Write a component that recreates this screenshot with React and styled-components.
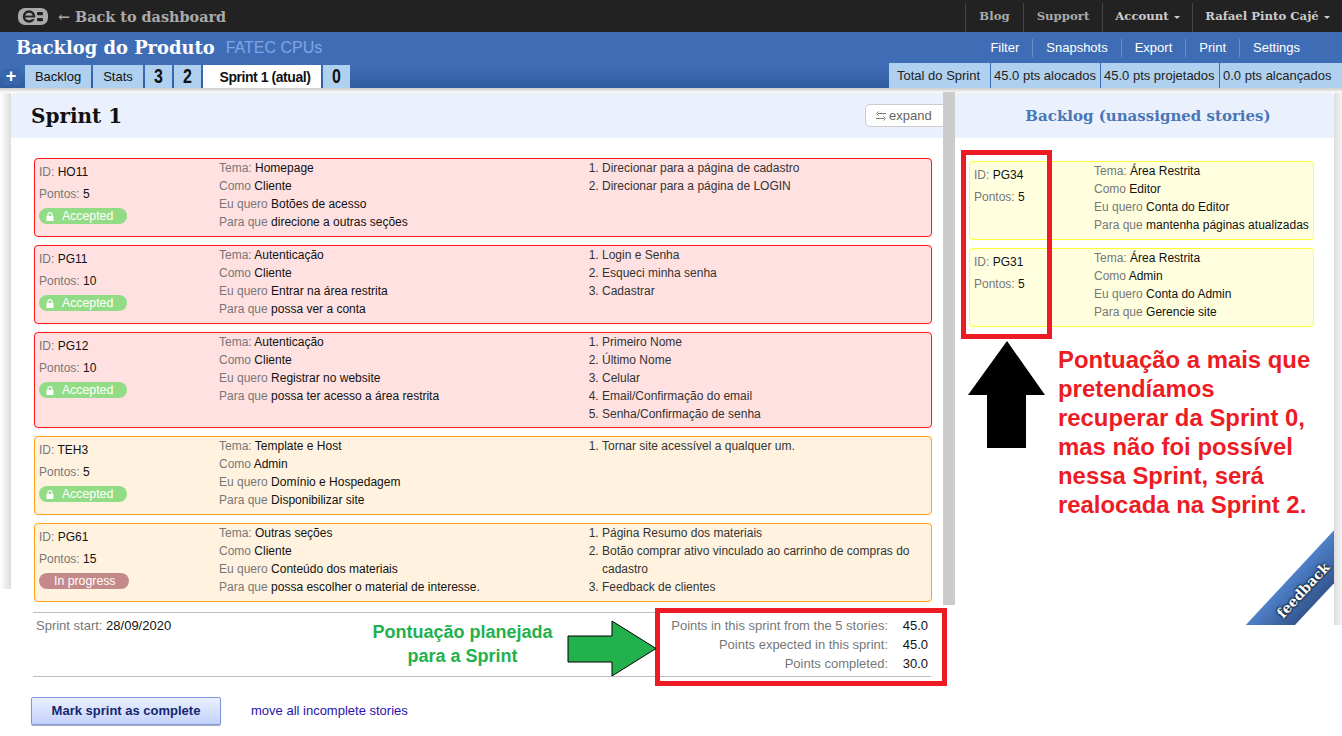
import React from "react";
import styled, { createGlobalStyle } from "styled-components";

const serif = `"DejaVu Serif", "Liberation Serif", serif`;
const sans = `"Liberation Sans", Arial, sans-serif`;

const sprintStories = [
  {
    id: "HO11", points: 5, tone: "red", status: "accepted", tema: "Homepage", como: "Cliente",
    quero: "Botões de acesso", para: "direcione a outras seções",
    tasks: ["Direcionar para a página de cadastro", "Direcionar para a página de LOGIN"],
  },
  {
    id: "PG11", points: 10, tone: "red", status: "accepted", tema: "Autenticação", como: "Cliente",
    quero: "Entrar na área restrita", para: "possa ver a conta",
    tasks: ["Login e Senha", "Esqueci minha senha", "Cadastrar"],
  },
  {
    id: "PG12", points: 10, tone: "red", status: "accepted", tema: "Autenticação", como: "Cliente",
    quero: "Registrar no website", para: "possa ter acesso a área restrita",
    tasks: ["Primeiro Nome", "Último Nome", "Celular", "Email/Confirmação do email", "Senha/Confirmação de senha"],
  },
  {
    id: "TEH3", points: 5, tone: "orange", status: "accepted", tema: "Template e Host", como: "Admin",
    quero: "Domínio e Hospedagem", para: "Disponibilizar site",
    tasks: ["Tornar site acessível a qualquer um."],
  },
  {
    id: "PG61", points: 15, tone: "orange", status: "progress", tema: "Outras seções", como: "Cliente",
    quero: "Conteúdo dos materiais", para: "possa escolher o material de interesse.",
    tasks: ["Página Resumo dos materiais", "Botão comprar ativo vinculado ao carrinho de compras do cadastro", "Feedback de clientes"],
  },
];

const backlogStories = [
  { id: "PG34", points: 5, tema: "Área Restrita", como: "Editor", quero: "Conta do Editor", para: "mantenha páginas atualizadas" },
  { id: "PG31", points: 5, tema: "Área Restrita", como: "Admin", quero: "Conta do Admin", para: "Gerencie site" },
];

const tones = {
  red: { bg: "#ffe1e1", line: "#ff1a1a" },
  orange: { bg: "#fff3e0", line: "#ffa31a" },
  yellow: { bg: "#ffffe0", line: "#ffff33" },
};

const GlobalStyle = createGlobalStyle`
  html, body { margin: 0; padding: 0; background: #fff; }
  body { font-family: ${sans}; font-size: 12px; color: #111; }
  * { box-sizing: border-box; }
`;

const Page = styled.div`
  position: relative;
  width: 1342px;
  height: 736px;
  overflow: hidden;
`;

const TopBar = styled.div`
  height: 32px;
  background: #222;
  display: flex;
  align-items: center;
  padding: 0 0 0 18px;
`;

const BackLink = styled.a`
  margin-left: 10px;
  font: bold 14.4px ${serif};
  color: #aaa;
`;

const TopNav = styled.nav`
  margin-left: auto;
  display: flex;
  height: 29px;
  align-self: flex-start;
  margin-top: 3px;
`;

const TopItem = styled.a`
  border-left: 1px solid #444;
  display: flex;
  align-items: center;
  justify-content: center;
  width: ${(p) => p.$w}px;
  font: bold 11.7px ${serif};
  color: ${(p) => (p.$light ? "#ccc" : "#aaa")};
  padding-bottom: 3px;
`;

const Caret = styled.span`
  display: inline-block;
  margin-left: 5px;
  margin-top: 3px;
  border: 3px solid transparent;
  border-top-color: #ccc;
  border-bottom: 0;
`;

const Header = styled.header`
  position: relative;
  height: 56px;
  background: linear-gradient(#3f6db5 0%, #3f6db5 65%, #2f5c9f 100%);
`;

const TitleRow = styled.div`
  height: 31px;
  display: flex;
  align-items: center;
  padding-left: 16px;
`;

const ProductName = styled.h1`
  margin: 0;
  font: bold 17.9px ${serif};
  color: #fff;
`;

const ProjectName = styled.span`
  margin-left: 11px;
  font-size: 16px;
  color: #7fa6e4;
`;

const HeaderNav = styled.nav`
  margin-left: auto;
  display: flex;
  margin-right: 42px;
  margin-top: 1px;
`;

const HeaderLink = styled.a`
  color: #fff;
  font-size: 13px;
  line-height: 18px;
  padding: 0 13px;
  border-left: 1px solid ${(p) => (p.$first ? "transparent" : "#6a90c8")};
  &:last-child { padding-right: 0; }
`;

const TabRow = styled.div`
  position: absolute;
  left: 0;
  right: 0;
  bottom: 0;
  display: flex;
  align-items: flex-end;
`;

const AddTab = styled.div`
  width: 16px;
  height: 16px;
  margin: 0 6px 3px 3px;
  background: #3866ad;
  color: #fff;
  font: bold 18px/15px ${sans};
  text-align: center;
`;

const Tab = styled.div`
  height: 23px;
  width: ${(p) => p.$w}px;
  margin-right: 2px;
  background: ${(p) => (p.$active ? "#fff" : "#b0d0f0")};
  color: #111;
  display: flex;
  align-items: center;
  justify-content: center;
  font: ${(p) => (p.$active ? `bold 14px ${sans}` : `13px ${sans}`)};
  padding-left: ${(p) => (p.$active ? 6 : 0)}px;
  letter-spacing: ${(p) => (p.$active ? "-0.45px" : "0")};
`;

const TabNumber = styled.span`
  display: inline-block;
  font: bold 20px ${sans};
  transform: scaleX(0.8);
`;

const SprintTotals = styled.div`
  margin-left: auto;
  height: 25px;
  display: flex;
  align-items: center;
  background: #b0d0f0;
  font-size: 13px;
`;

const TotalCell = styled.div`
  height: 25px;
  line-height: 25px;
  width: ${(p) => p.$w}px;
  padding-left: ${(p) => p.$pad}px;
  color: #222;
  white-space: nowrap;
  & + & { border-left: 1px solid #3f6db5; }
`;

const Board = styled.div`
  display: flex;
  align-items: flex-start;
`;

const SprintColumn = styled.div`
  width: 955px;
  flex: none;
`;

const SprintPane = styled.section`
  position: relative;
  height: 517px;
  padding: 5px 0 0 11px;
  background: linear-gradient(#ccc, #fff 5px) top / 100% 5px no-repeat;
  &::before {
    content: "";
    position: absolute;
    left: 0;
    top: 5px;
    bottom: 16px;
    width: 11px;
    background: linear-gradient(to right, #fff, #ddd);
  }
  &::after {
    content: "";
    position: absolute;
    right: 0;
    top: 4px;
    bottom: 0;
    width: 12px;
    background: #ccc;
  }
`;

const PaneHead = styled.div`
  height: 45px;
  background: #eaf1fd;
  display: flex;
  align-items: center;
  padding-left: 20px;
  border-radius: 4px 0 0 0;
  overflow: hidden;
`;

const SprintTitle = styled.h2`
  margin: 0;
  font: bold 20px ${serif};
  color: #111;
`;

const ExpandButton = styled.button`
  margin-left: auto;
  width: 90px;
  height: 23px;
  flex: none;
  border: 1px solid #ccc;
  border-radius: 5px 0 0 5px;
  background: #fff;
  color: #666;
  font: 13px ${sans};
  padding: 0 0 0 10px;
  display: flex;
  align-items: center;
  gap: 3px;
`;

const CardList = styled.div`
  padding: 20px 23px 0 23px;
`;

const BacklogList = styled.div`
  padding: 23px 20px 0 14px;
`;

const Card = styled.article`
  display: grid;
  grid-template-columns: ${(p) => p.$columns};
  min-height: 79px;
  margin-bottom: 8px;
  padding: 0 4px 4px 4px;
  background: ${(p) => tones[p.$tone].bg};
  border: 1px solid ${(p) => tones[p.$tone].line};
  border-radius: 4px;
  box-shadow: 0 0 2px ${(p) => tones[p.$tone].bg};
`;

const Meta = styled.div`
  padding-top: 2px;
`;

const MetaLine = styled.div`
  height: 22px;
  line-height: 22px;
  white-space: nowrap;
`;

const Label = styled.span`
  color: #777;
`;

const Detail = styled.div`
  line-height: 18px;
`;

const DetailLine = styled.div`
  height: 18px;
  white-space: nowrap;
`;

const Tasks = styled.ol`
  margin: 0;
  padding: 0 10px 0 13px;
  line-height: 18px;
  color: #333;
`;

const Pill = styled.div`
  margin-top: 3px;
  height: 16px;
  width: ${(p) => p.$w}px;
  border-radius: 8px;
  background: ${(p) => (p.$done ? "#92dc86" : "#c48a8a")};
  color: #fff;
  font-size: 12.3px;
  line-height: 16px;
  display: flex;
  align-items: center;
  padding-left: ${(p) => (p.$done ? 7 : 15)}px;
  gap: 8px;
`;

const SprintFooter = styled.div`
  margin: 7px 24px 0 33px;
  height: 65px;
  border-top: 1px solid #bbb;
  border-bottom: 1px solid #bbb;
  display: flex;
  justify-content: space-between;
  padding: 3px 3px 0 3px;
  font-size: 13px;
`;

const StartDate = styled.div`
  line-height: 19px;
`;

const Totals = styled.div`
  display: grid;
  grid-template-columns: auto 25px;
  column-gap: 15px;
  justify-items: end;
  align-content: start;
  line-height: 19px;
`;

const Actions = styled.div`
  display: flex;
  align-items: center;
  margin: 20px 0 0 31px;
  gap: 30px;
`;

const CompleteButton = styled.button`
  width: 190px;
  height: 28px;
  padding: 0 0 2px;
  border: 1px solid #7d97e0;
  border-radius: 2px;
  background: linear-gradient(#eaf0ff, #c4d2fb);
  color: #14266e;
  font: bold 13px ${sans};
  box-shadow: 0 1px 1px #aab;
`;

const MoveLink = styled.a`
  color: #2a12ac;
  font-size: 13px;
  margin-bottom: 2px;
`;

const BacklogPane = styled.section`
  position: relative;
  width: 387px;
  height: 537px;
  padding: 5px 8px 0 0;
  overflow: hidden;
  background: linear-gradient(#ccc, #fff 5px) top / 100% 5px no-repeat,
    linear-gradient(to right, #ddd, #f4f4f4) right / 8px 100% no-repeat;
`;

const BacklogHead = styled.div`
  height: 45px;
  background: #eaf1fd;
  display: flex;
  align-items: center;
  justify-content: center;
  padding-left: 7px;
  font: bold 15px ${serif};
  color: #4a76b8;
  border-radius: 0 4px 0 0;
`;

const RibbonClip = styled.div`
  position: absolute;
  left: 280px;
  right: 8px;
  top: 430px;
  bottom: 0;
  overflow: hidden;
`;

const Ribbon = styled.div`
  position: absolute;
  left: -32px;
  top: 54px;
  width: 200px;
  height: 36px;
  transform: rotate(-47deg);
  background: linear-gradient(#4f80c8, #34568f);
  color: #fff;
  font: bold 13.8px/36px ${serif};
  text-align: center;
  padding-left: 0;
  text-shadow: 0 0 2px #123, 0 0 2px #123, 0 0 3px #123;
`;

const Marker = styled.div`
  position: absolute;
  left: ${(p) => p.$x}px;
  top: ${(p) => p.$y}px;
  width: ${(p) => p.$w}px;
  height: ${(p) => p.$h}px;
  border: 5px solid #ed1c24;
`;

const Arrow = styled.svg`
  position: absolute;
  left: ${(p) => p.$x}px;
  top: ${(p) => p.$y}px;
`;

const RedNote = styled.div`
  position: absolute;
  left: 1058px;
  top: 345px;
  font: bold 23.9px/29px ${sans};
  color: #ed1c24;
  white-space: nowrap;
`;

const GreenNote = styled.div`
  position: absolute;
  left: 340px;
  top: 620px;
  width: 245px;
  text-align: center;
  font: bold 18px/24px ${sans};
  color: #22b14c;
`;

function Logo() {
  return (
    <svg width="30" height="17" viewBox="0 0 30 17" style={{ flex: "none" }}>
      <rect x="0" y="0" width="30" height="17" rx="7" fill="#aaa" />
      <circle cx="11" cy="8.5" r="5" fill="none" stroke="#222" strokeWidth="2.4" />
      <rect x="7" y="7.6" width="8" height="1.8" fill="#222" />
      <rect x="14" y="9.6" width="3" height="1.6" fill="#aaa" />
      <rect x="19" y="4" width="6" height="3.2" rx="1" fill="#222" />
      <rect x="19" y="10" width="6" height="3.2" rx="1" fill="#222" />
    </svg>
  );
}

function Lock() {
  return (
    <svg width="8" height="9" viewBox="0 0 8 9">
      <path d="M2 4V2.6a2 2 0 0 1 4 0V4" fill="none" stroke="#fff" strokeWidth="1.2" />
      <rect x="0.5" y="4" width="7" height="5" fill="#fff" />
    </svg>
  );
}

function StoryDetail({ story }) {
  return (
    <Detail>
      <DetailLine><Label>Tema:</Label> {story.tema}</DetailLine>
      <DetailLine><Label>Como</Label> {story.como}</DetailLine>
      <DetailLine><Label>Eu quero</Label> {story.quero}</DetailLine>
      <DetailLine><Label>Para que</Label> {story.para}</DetailLine>
    </Detail>
  );
}

function StoryMeta({ story }) {
  return (
    <Meta>
      <MetaLine><Label>ID:</Label> {story.id}</MetaLine>
      <MetaLine><Label>Pontos:</Label> {story.points}</MetaLine>
      {story.status === "accepted" && <Pill $done $w={88}><Lock />Accepted</Pill>}
      {story.status === "progress" && <Pill $w={90}>In progress</Pill>}
    </Meta>
  );
}

export default function App() {
  return (
    <Page>
      <GlobalStyle />
      <TopBar>
        <Logo />
        <BackLink>← Back to dashboard</BackLink>
        <TopNav>
          <TopItem $w={58}>Blog</TopItem>
          <TopItem $w={79}>Support</TopItem>
          <TopItem $w={90} $light>Account<Caret /></TopItem>
          <TopItem $w={150} $light>Rafael Pinto Cajé<Caret /></TopItem>
        </TopNav>
      </TopBar>
      <Header>
        <TitleRow>
          <ProductName>Backlog do Produto</ProductName>
          <ProjectName>FATEC CPUs</ProjectName>
          <HeaderNav>
            <HeaderLink $first>Filter</HeaderLink>
            <HeaderLink>Snapshots</HeaderLink>
            <HeaderLink>Export</HeaderLink>
            <HeaderLink>Print</HeaderLink>
            <HeaderLink>Settings</HeaderLink>
          </HeaderNav>
        </TitleRow>
        <TabRow>
          <AddTab>+</AddTab>
          <Tab $w={66}>Backlog</Tab>
          <Tab $w={50}>Stats</Tab>
          <Tab $w={27}><TabNumber>3</TabNumber></Tab>
          <Tab $w={27}><TabNumber>2</TabNumber></Tab>
          <Tab $w={118} $active>Sprint 1 (atual)</Tab>
          <Tab $w={27}><TabNumber>0</TabNumber></Tab>
          <SprintTotals>
            <TotalCell $w={101} $pad={8}>Total do Sprint</TotalCell>
            <TotalCell $w={110} $pad={3}>45.0 pts alocados</TotalCell>
            <TotalCell $w={119} $pad={3}>45.0 pts projetados</TotalCell>
            <TotalCell $w={123} $pad={3}>0.0 pts alcançados</TotalCell>
          </SprintTotals>
        </TabRow>
      </Header>
      <Board>
        <SprintColumn>
          <SprintPane>
            <PaneHead>
              <SprintTitle>Sprint 1</SprintTitle>
              <ExpandButton>
                <svg width="10" height="10" viewBox="0 0 10 10">
                  <path d="M2 2.500h8M0 7.500h8M2.500.5.500 2.500l2 2M7.500 5.500l2 2-2 2" fill="none" stroke="#777" />
                </svg>
                expand
              </ExpandButton>
            </PaneHead>
            <CardList>
              {sprintStories.map((story) => (
                <Card key={story.id} $tone={story.tone} $columns="180px 370px 1fr">
                  <StoryMeta story={story} />
                  <StoryDetail story={story} />
                  <Tasks>
                    {story.tasks.map((task) => <li key={task}>{task}</li>)}
                  </Tasks>
                </Card>
              ))}
            </CardList>
          </SprintPane>
          <SprintFooter>
            <StartDate><Label>Sprint start:</Label> 28/09/2020</StartDate>
            <Totals>
              <Label>Points in this sprint from the 5 stories:</Label><span>45.0</span>
              <Label>Points expected in this sprint:</Label><span>45.0</span>
              <Label>Points completed:</Label><span>30.0</span>
            </Totals>
          </SprintFooter>
          <Actions>
            <CompleteButton>Mark sprint as complete</CompleteButton>
            <MoveLink>move all incomplete stories</MoveLink>
          </Actions>
        </SprintColumn>
        <BacklogPane>
          <BacklogHead>Backlog (unassigned stories)</BacklogHead>
          <BacklogList>
            {backlogStories.map((story) => (
              <Card key={story.id} $tone="yellow" $columns="120px 1fr">
                <StoryMeta story={story} />
                <StoryDetail story={story} />
              </Card>
            ))}
          </BacklogList>
          <RibbonClip>
            <Ribbon>feedback</Ribbon>
          </RibbonClip>
        </BacklogPane>
      </Board>

      <Marker $x={961} $y={150} $w={91} $h={189} />
      <Marker $x={655} $y={608} $w={292} $h={78} />
      <Arrow $x={967} $y={340} width="80" height="110" viewBox="0 0 80 110">
        <path d="M40 1 78 55H59V108H20V55H1Z" fill="#000" />
      </Arrow>
      <Arrow $x={567} $y={620} width="92" height="58" viewBox="0 0 92 58">
        <path d="M1 16H45V1L89 28.500 45 56V42H1Z" fill="#22b14c" stroke="#000" />
      </Arrow>
      <RedNote>
        Pontuação a mais que<br />
        pretendíamos<br />
        recuperar da Sprint 0,<br />
        mas não foi possível<br />
        nessa Sprint, será<br />
        realocada na Sprint 2.
      </RedNote>
      <GreenNote>Pontuação planejada<br />para a Sprint</GreenNote>
    </Page>
  );
}
